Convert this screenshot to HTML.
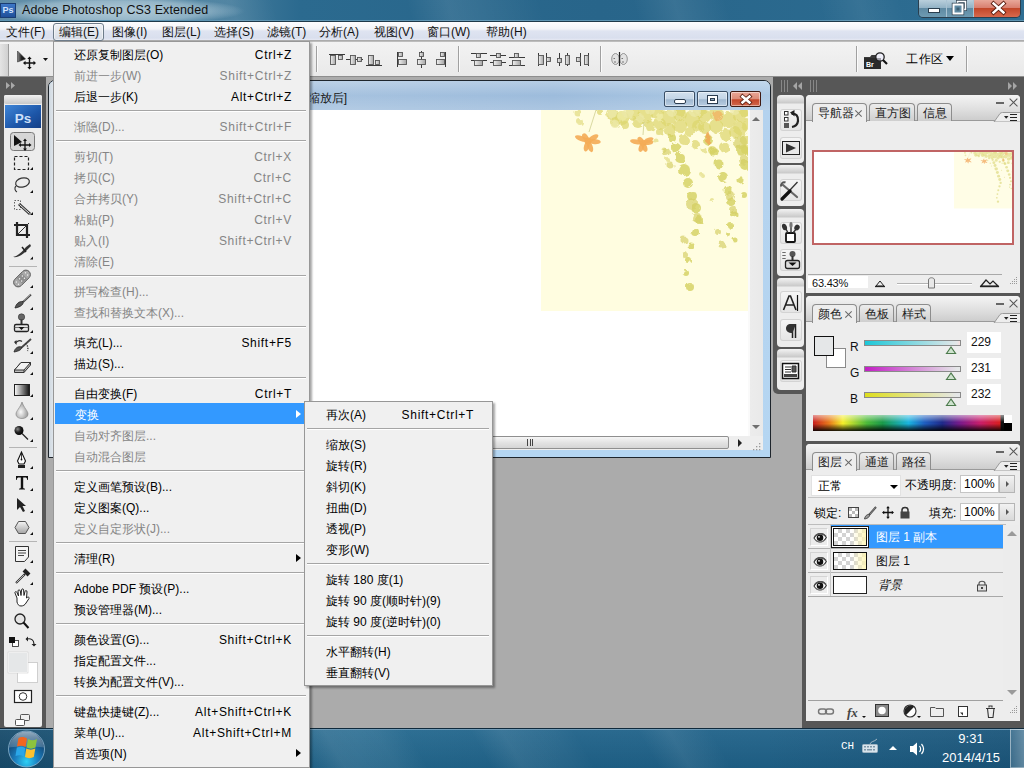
<!DOCTYPE html>
<html><head><meta charset="utf-8">
<style>
*{margin:0;padding:0;box-sizing:border-box}
html,body{width:1024px;height:768px;overflow:hidden}
body{position:relative;background:#ababab;font-family:"Liberation Sans",sans-serif;font-size:12px;color:#000}
.a{position:absolute}
#title{left:0;top:0;width:1024px;height:22px;background:radial-gradient(ellipse 130px 14px at 115px 11px,rgba(200,220,230,.75),rgba(200,220,230,.45) 70%,rgba(200,220,230,0) 100%),linear-gradient(90deg,#5f8ca6 0,#6b97b0 150px,#3f7899 240px,#2b6a8f 300px,#28658a 600px,#2b6a8f 850px,#2f6e93 1024px);border-bottom:1px solid #1f3a4a;box-shadow:inset 0 -1px 0 #5e95b3}
#menubar{left:0;top:22px;width:1024px;height:19px;background:linear-gradient(#fdfdfe 0,#f3f4f8 7px,#dfe4f1 9px,#d9dfee 16px,#e6e9f3 18px);border-bottom:1px solid #acacac}
.mb{position:absolute;top:0;line-height:20px;font-size:12px;color:#111}
#options{left:0;top:41px;width:1024px;height:36px;background:linear-gradient(#f3f3f3,#e9e9e9);border-top:1px solid #bdbdbd;border-bottom:1px solid #8e8e8e}
.vsep{position:absolute;top:4px;width:2px;height:26px;border-left:1px solid #a0a0a0;border-right:1px solid #fbfbfb}
#tools{left:0;top:77px;width:46px;height:651px;background:#575757}
#dock{left:773px;top:76px;width:251px;height:652px;background:#535353}
#doc{left:48px;top:80px;width:722px;height:377px;background:#b9d1ea;border:1px solid #2b3a47;border-radius:6px 6px 0 0}
#taskbar{left:0;top:728px;width:1024px;height:40px;background:linear-gradient(90deg,#174b6b 0,#1d5b80 15%,#24698f 35%,#1f6289 55%,#1f6188 75%,#1a557a 100%)}
#menu{left:53px;top:41px;width:257px;height:727px;background:#f0f0f0;border:1px solid #979797;box-shadow:2px 2px 2px rgba(0,0,0,.35)}
#sub{left:304px;top:401px;width:189px;height:285px;background:#f0f0f0;border:1px solid #979797;box-shadow:2px 2px 2px rgba(0,0,0,.35)}
.mi{position:absolute;left:0;width:100%;height:21px;line-height:24px;padding-left:20px}
.mi .k{position:absolute;right:18px;top:0;letter-spacing:0.7px}
.dis{color:#858585}
#menu .mi{padding-left:20px}
#menu .mi .k{right:17px}
#sub .mi{padding-left:21px}
#sub .mi .k{right:18px}
.mi.hl{background:#3399ff;color:#fff;left:1px;width:249px}
.arr{position:absolute;left:242px;top:6.5px;width:0;height:0;border-left:5px solid #000;border-top:4.5px solid transparent;border-bottom:4.5px solid transparent}
.hl .arr{border-left-color:#fff;left:241px}
.wb{position:absolute;top:10px;width:31px;height:16px;border:1px solid #3a4f66;border-radius:2px;background:linear-gradient(#d3e1ee,#c2d4e6 50%,#9fb8d0 55%,#b9cde2);box-shadow:inset 0 0 0 1px rgba(255,255,255,.45)}
.ig{position:absolute;left:777px;width:27px;background:linear-gradient(#f3f3f3 0,#c9c9c9 8px,#ededed 9px,#ededed);border-radius:4px}
.ib{position:absolute;left:780px;width:22px;height:22px;border-radius:3px;background:linear-gradient(#f6f6f6,#e4e4e4);box-shadow:inset 0 0 0 1px #d3d3d3}
.pn{position:absolute;left:806px;width:214px;background:#ededed;border-radius:4px 4px 0 0;overflow:hidden}
.tabrow{position:absolute;left:0;top:0;width:214px;height:26px;background:linear-gradient(#f4f4f4,#dedede 60%,#cdcdcd);border-bottom:1px solid #9a9a9a}
.tab{position:absolute;top:8px;height:18px;border:1px solid #8d8d8d;border-bottom:none;border-radius:4px 4px 0 0;background:linear-gradient(#ececec,#cfcfcf);font-size:11.5px;line-height:19px;padding-left:5px;color:#222;white-space:nowrap}
.tab.act{background:#ededed;height:19px;z-index:1}
.tx{position:absolute;right:4px;top:6px;width:7px;height:7px;font-size:0}
.tx::before,.tx::after{content:"";position:absolute;left:-1px;top:3px;width:9px;height:1px;background:#666;transform:rotate(45deg)}
.tx::after{transform:rotate(-45deg)}
.pmin{position:absolute;width:8px;height:2px;background:#666}
.pcl{position:absolute;width:9px;height:9px}
.pcl::before,.pcl::after{content:"";position:absolute;left:-1px;top:4px;width:11px;height:1.2px;background:#555;transform:rotate(45deg)}
.pcl::after{transform:rotate(-45deg)}
.pmenu{position:absolute;left:184px;top:17px;width:30px;height:10px}
.pmenu svg{position:absolute;left:0;top:0}
.cl{position:absolute;left:44px;font-size:12px;line-height:14px;color:#111}
.sl{position:absolute;left:58px;width:97px;height:6px;border:1px solid #8a8a8a}
.cv{position:absolute;left:161px;width:34px;height:21px;background:#fff;font-size:12px;line-height:20px;padding-left:4px;color:#111}
.ibox{position:absolute;left:154px;width:39px;height:18px;background:#fff;border:1px solid #c5c5c5;font-size:12px;line-height:17px;padding-left:3px}
.ibtn{position:absolute;left:193px;width:16px;height:18px;background:linear-gradient(#f2f2f2,#d9d9d9);border:1px solid #b5b5b5}
.ibtn::after{content:"";position:absolute;left:6px;top:5px;border-left:3px solid #555;border-top:3px solid transparent;border-bottom:3px solid transparent}
.eye{position:absolute;left:4px;width:18px;height:18px;background:#ececec;border:1px solid #d4d4d4;border-right-color:#fff;border-bottom-color:#fff}
.th{position:absolute;left:27px;width:34px;height:18px;border:1px solid #111;background-color:#fff;background-image:linear-gradient(90deg,rgba(255,250,200,0) 55%,rgba(255,246,180,.9)),linear-gradient(45deg,#d3d3d3 25%,transparent 25%,transparent 75%,#d3d3d3 75%),linear-gradient(45deg,#d3d3d3 25%,transparent 25%,transparent 75%,#d3d3d3 75%);background-size:100% 100%,8px 8px,8px 8px;background-position:0 0,0 0,4px 4px}
.sep{position:absolute;left:2px;right:3px;height:2px;background:#a5a5a5;border-bottom:1px solid #fff}
</style></head><body>
<div id="title" class="a">
 <div class="a" style="left:0;top:0;width:1024px;height:21px;background:linear-gradient(75deg,rgba(255,255,255,0) 0,rgba(255,255,255,0) 20%,rgba(255,255,255,.08) 23%,rgba(255,255,255,0) 27%,rgba(255,255,255,0) 40%,rgba(255,255,255,.09) 44%,rgba(255,255,255,.03) 50%,rgba(255,255,255,0) 53%,rgba(255,255,255,0) 62%,rgba(255,255,255,.08) 66%,rgba(255,255,255,0) 71%,rgba(255,255,255,0) 80%,rgba(255,255,255,.06) 84%,rgba(255,255,255,0) 88%)"></div>
 <div class="a" style="left:0;top:3px;width:16px;height:15px;background:linear-gradient(#3e78c8,#1f4f9a);border:1px solid #1a3d73;color:#cfe3ff;font-size:9px;font-weight:bold;line-height:13px;text-align:center">Ps</div>
 <div class="a" style="left:22px;top:3px;font-size:12.5px;line-height:15px;color:#111;letter-spacing:0.1px">Adobe Photoshop CS3 Extended</div>
 <div class="a" style="left:918px;top:0;width:103px;height:18px;border:1px solid #2a3f4f;border-top:none;border-radius:0 0 5px 5px;overflow:hidden">
  <div class="a" style="left:0;top:0;width:28px;height:17px;background:linear-gradient(#b9cfdc,#93b3c6 45%,#5f8aa3 50%,#6f9bb2);border-right:1px solid #a9c3d3"></div>
  <div class="a" style="left:28px;top:0;width:27px;height:17px;background:linear-gradient(#b9cfdc,#93b3c6 45%,#5f8aa3 50%,#6f9bb2);border-right:1px solid #a9c3d3"></div>
  <div class="a" style="left:55px;top:0;width:48px;height:17px;background:linear-gradient(#e8a89a,#d98070 45%,#c2472a 50%,#d8694d)"></div>
  <svg class="a" style="left:0;top:0" width="103" height="18" viewBox="918 0 103 18">
   <rect x="927.5" y="8.5" width="11" height="4" fill="#fff" stroke="#2b3f4f" stroke-width="1"/>
   <rect x="956.5" y="1.5" width="8" height="8" fill="none" stroke="#2b3f4f" stroke-width="3"/>
   <rect x="956.5" y="1.5" width="8" height="8" fill="none" stroke="#fff" stroke-width="1.6"/>
   <rect x="952.5" y="4.5" width="9" height="9" fill="#5f8aa3" stroke="#2b3f4f" stroke-width="3.4"/>
   <rect x="952.5" y="4.5" width="9" height="9" fill="#5f8aa3" stroke="#fff" stroke-width="2"/>
   <rect x="955.5" y="7.5" width="3" height="3" fill="#3d5f73"/>
   <path d="M992.5 3.5 L1002.5 12.5 M1002.5 3.5 L992.5 12.5" stroke="#5a1d10" stroke-width="4.2" stroke-linecap="square"/>
   <path d="M992.5 3.5 L1002.5 12.5 M1002.5 3.5 L992.5 12.5" stroke="#fff" stroke-width="2.4" stroke-linecap="square"/>
  </svg>
 </div>
</div>
<div id="menubar" class="a">
 <span class="mb" style="left:6px">文件(F)</span>
 <div class="a" style="left:53px;top:1px;width:51px;height:18px;border:1px solid #6e7c8a;border-radius:3px;background:linear-gradient(#eef1f5,#d6dce6);box-shadow:inset 0 0 0 1px rgba(255,255,255,.5)"></div>
 <span class="mb" style="left:59px">编辑(E)</span>
 <span class="mb" style="left:112px">图像(I)</span>
 <span class="mb" style="left:162px">图层(L)</span>
 <span class="mb" style="left:214px">选择(S)</span>
 <span class="mb" style="left:267px">滤镜(T)</span>
 <span class="mb" style="left:319px">分析(A)</span>
 <span class="mb" style="left:374px">视图(V)</span>
 <span class="mb" style="left:427px">窗口(W)</span>
 <span class="mb" style="left:486px">帮助(H)</span>
</div>
<div id="options" class="a">
 <div class="a" style="left:0;top:2px;width:9px;height:32px;background:linear-gradient(90deg,#e4e4e4,#d0d0d0);border-right:1px solid #9a9a9a"></div>
 <svg class="a" style="left:14px;top:6px" width="40" height="22" viewBox="0 0 40 22">
  <defs><linearGradient id="mvg" x1="0" x2="1"><stop offset="0" stop-color="#8a8a8a"/><stop offset="0.5" stop-color="#222"/><stop offset="1" stop-color="#000"/></linearGradient></defs>
  <path d="M3.5 3 L3.5 14 L11.5 11 Z" fill="url(#mvg)" stroke="#333" stroke-width="0.6"/>
  <path d="M15.5 10.5 V19.5 M11 15 H20" stroke="#111" stroke-width="1.4"/>
  <path d="M15.5 8.5 L13.3 11 H17.7 Z M15.5 21.5 L13.3 19 H17.7 Z M9 15 L11.5 12.8 V17.2 Z M22 15 L19.5 12.8 V17.2 Z" fill="#111"/>
  <path d="M29 10 L34 10 L31.5 13 Z" fill="#111"/>
 </svg>
 <div class="vsep" style="left:316px"></div>
 <div class="vsep" style="left:458px"></div>
 <div class="vsep" style="left:600px"></div>
 <div class="vsep" style="left:856px"></div>
 <div class="vsep" style="left:966px"></div>
 <svg class="a" style="left:0;top:-42px" width="1024" height="80" viewBox="0 0 1024 80">
  <defs><linearGradient id="gb" x1="0" x2="1"><stop offset="0" stop-color="#f0f0f0"/><stop offset="1" stop-color="#a5a5a5"/></linearGradient></defs>
  <g stroke="#3a3a3a" stroke-width="1" fill="none">
   <path d="M329 54.5 H345 M346 59.5 H363 M366 65.5 H382 M397.5 52 V67 M421.5 51 V68 M445.5 52 V67"/>
   <path d="M471 53.5 H487 M471 60.5 H487 M490 55.5 H506 M490 62.5 H506 M509 57.5 H525 M509 65.5 H525"/>
   <path d="M538.5 53 V66 M546.5 53 V66 M559.5 53 V66 M567.5 53 V66 M580.5 53 V66 M588.5 53 V66"/>
  </g>
  <g stroke="#555" stroke-width="0.9" fill="url(#gb)">
   <rect x="330.5" y="55.5" width="5" height="9"/><rect x="338.5" y="55.5" width="4" height="4"/>
   <rect x="350.5" y="55.5" width="5" height="9"/><rect x="357.5" y="57.5" width="4" height="4"/>
   <rect x="368.5" y="55.5" width="5" height="9"/><rect x="375.5" y="60.5" width="4" height="4"/>
   <rect x="398.5" y="52.5" width="4" height="4"/><rect x="398.5" y="59.5" width="8" height="5"/>
   <rect x="419.5" y="52.5" width="4" height="4"/><rect x="417.5" y="59.5" width="8" height="5"/>
   <rect x="440.5" y="52.5" width="4" height="4"/><rect x="436.5" y="59.5" width="8" height="5"/>
   <rect x="476.5" y="53.5" width="4" height="4"/><rect x="474.5" y="60.5" width="8" height="5"/>
   <rect x="496.5" y="53.5" width="4" height="4"/><rect x="493.5" y="60.5" width="8" height="5"/>
   <rect x="514.5" y="53.5" width="4" height="4"/><rect x="512.5" y="60.5" width="8" height="5"/>
   <rect x="538.5" y="55.5" width="5" height="9"/><rect x="546.5" y="57.5" width="4" height="4"/>
   <rect x="557.5" y="58.5" width="4" height="4"/><rect x="565.5" y="55.5" width="4" height="9"/>
   <rect x="576.5" y="57.5" width="4" height="4"/><rect x="584.5" y="55.5" width="4" height="9"/>
  </g>
  <g>
   <ellipse cx="615.5" cy="59" rx="3.8" ry="5.5" fill="#e2e2e2" stroke="#8a8a8a" stroke-width="0.9"/>
   <ellipse cx="623.5" cy="59" rx="3.8" ry="5.5" fill="#e2e2e2" stroke="#8a8a8a" stroke-width="0.9"/>
   <path d="M619.5 52 V66" stroke="#222" stroke-width="1.2"/>
   <path d="M613.5 58.5 h1.5 M621.5 58.5 h1.5 M614 62 h2 M622 62 h2" stroke="#777" stroke-width="1"/>
  </g>
 </svg>
 <svg class="a" style="left:862px;top:9px" width="28" height="20" viewBox="0 0 28 20">
  <path d="M2 6 H8 L9.5 4 H14 V18 H2 Z" fill="#3a3a3a"/>
  <rect x="2" y="7" width="17" height="11" fill="#2b2b2b"/>
  <text x="4" y="16" font-size="7" font-weight="bold" fill="#fff" font-family="Liberation Sans">Br</text>
  <circle cx="18" cy="6" r="4.2" fill="#eef" fill-opacity="0.6" stroke="#222" stroke-width="1.3"/>
  <path d="M21 9 L25 13" stroke="#111" stroke-width="2.2"/>
 </svg>
 <div class="a" style="left:906px;top:9px;font-size:12px;line-height:16px;color:#000;letter-spacing:0.5px">工作区</div>
 <div class="a" style="left:946px;top:14px;width:0;height:0;border-top:5px solid #000;border-left:4.5px solid transparent;border-right:4.5px solid transparent"></div>
</div>
<div id="tools" class="a"></div>
<svg class="a" style="left:0;top:0" width="50" height="728" viewBox="0 0 50 728">
 <defs>
  <linearGradient id="tg1" x1="0" y1="0" x2="0" y2="1"><stop offset="0" stop-color="#f2f2f2"/><stop offset="1" stop-color="#c9c9c9"/></linearGradient>
  <linearGradient id="psg" x1="0" y1="0" x2="1" y2="1"><stop offset="0" stop-color="#3f86d8"/><stop offset="0.6" stop-color="#1d56a8"/><stop offset="1" stop-color="#163f86"/></linearGradient>
  <linearGradient id="grd" x1="0" x2="1"><stop offset="0" stop-color="#fff"/><stop offset="1" stop-color="#111"/></linearGradient>
  <radialGradient id="dropg" cx="0.4" cy="0.6" r="0.6"><stop offset="0" stop-color="#fafafa"/><stop offset="1" stop-color="#9a9a9a"/></radialGradient>
  <radialGradient id="ballg" cx="0.35" cy="0.35" r="0.7"><stop offset="0" stop-color="#888"/><stop offset="0.5" stop-color="#222"/><stop offset="1" stop-color="#000"/></radialGradient>
  <linearGradient id="hexg" x1="0" y1="0" x2="0" y2="1"><stop offset="0" stop-color="#f5f5f5"/><stop offset="1" stop-color="#a5a5a5"/></linearGradient>
 </defs>
 <!-- header -->
 <path d="M6 82 L10 85.5 L6 89 Z M11 82 L15 85.5 L11 89 Z" fill="#a9a9a9"/>
 <!-- panel -->
 <rect x="4" y="95" width="38" height="632" rx="2" fill="#ededed"/>
 <rect x="4" y="95" width="38" height="9" rx="2" fill="url(#tg1)"/>
 <rect x="5" y="105" width="36" height="23" fill="url(#psg)"/>
 <text x="23" y="122.5" text-anchor="middle" font-family="Liberation Sans" font-size="13.5" font-weight="bold" fill="#cfe1fa">Ps</text>
 <!-- move tool selected -->
 <rect x="10.5" y="132.5" width="24" height="18" rx="3" fill="#d6d6d6" stroke="#7a7a7a" stroke-width="1"/>
 <path d="M14 135 L14 146 L22 142 Z" fill="#111"/>
 <path d="M25 140 V150 M20 145 H30" stroke="#111" stroke-width="1.3"/>
 <path d="M25 138.5 L23 141 H27 Z M25 151 L23 148.5 H27 Z M18.5 145 L21 143 V147 Z M31.5 145 L29 143 V147 Z" fill="#111"/>
 <!-- marquee -->
 <rect x="14.5" y="156.5" width="14" height="13" fill="none" stroke="#222" stroke-width="1.2" stroke-dasharray="3 2"/>
 <path d="M30 170 L33 167 V170 Z" fill="#111"/>
 <!-- lasso -->
 <ellipse cx="22.5" cy="182.5" rx="7" ry="4.5" fill="none" stroke="#333" stroke-width="1.2" transform="rotate(-15 22.5 182.5)"/>
 <path d="M16 186 C14 188 15 191 17 192" fill="none" stroke="#333" stroke-width="1.1"/>
 <path d="M30 193 L33 190 V193 Z" fill="#111"/>
 <!-- magic wand (quick select) -->
 <rect x="14.5" y="200.5" width="6" height="9" fill="none" stroke="#555" stroke-width="0.9" stroke-dasharray="1.5 1.5"/>
 <path d="M19 204 L30 214" stroke="#333" stroke-width="3"/>
 <path d="M19.5 204.5 L29.5 213.5" stroke="#eee" stroke-width="1"/>
 <path d="M30 215 L33 212 V215 Z" fill="#111"/>
 <!-- crop -->
 <path d="M17 222 V235 H30 M14 225 H27 V238" fill="none" stroke="#222" stroke-width="2.2"/>
 <path d="M18 234 L29 223" stroke="#333" stroke-width="1"/>
 <!-- slice -->
 <path d="M13 257 C18 256 23 251 26 247 L30 244 L31 246 L27 250 C24 254 18 258 13 257 Z" fill="#333"/>
 <path d="M22 247 L26 252" stroke="#222" stroke-width="1.5"/>
 <path d="M30 259.5 L33 256.5 V259.5 Z" fill="#111"/>
 <line x1="9" y1="266.5" x2="37" y2="266.5" stroke="#b5b5b5"/>
 <!-- healing -->
 <g transform="rotate(-45 22 278.5)"><rect x="12" y="274" width="20" height="9" rx="4.5" fill="#a9a9a9" stroke="#555" stroke-width="0.9"/>
 <rect x="18.5" y="274.5" width="7" height="8" fill="#8f8f8f"/>
 <circle cx="15.5" cy="277" r="0.7" fill="#eee"/><circle cx="15.5" cy="280" r="0.7" fill="#eee"/><circle cx="20" cy="277" r="0.7" fill="#eee"/><circle cx="20" cy="280" r="0.7" fill="#eee"/><circle cx="24" cy="277" r="0.7" fill="#eee"/><circle cx="24" cy="280" r="0.7" fill="#eee"/><circle cx="28.5" cy="277" r="0.7" fill="#eee"/><circle cx="28.5" cy="280" r="0.7" fill="#eee"/></g>
 <path d="M30 288 L33 285 V288 Z" fill="#111"/>
 <!-- brush -->
 <path d="M31 294.5 L23 302" stroke="#444" stroke-width="1.8"/>
 <path d="M30.5 294.5 L23.5 301" stroke="#ddd" stroke-width="0.6"/>
 <path d="M15 308 C16 304 19 301 23 301.5 C24 304 21 307 15 308 Z" fill="#555" stroke="#222" stroke-width="0.8"/>
 <path d="M30 310 L33 307 V310 Z" fill="#111"/>
 <!-- stamp -->
 <circle cx="21.5" cy="317" r="3.2" fill="#666" stroke="#333" stroke-width="0.6"/>
 <rect x="20.5" y="319.5" width="2" height="4.5" fill="#333"/>
 <rect x="14.5" y="324.5" width="14" height="7" rx="1.5" fill="#e6e6e6" stroke="#222" stroke-width="1.3"/>
 <path d="M14.5 327.5 H28.5" stroke="#555" stroke-width="0.8"/>
 <path d="M18.5 327 H24.5 L21.5 330 Z" fill="#111"/>
 <path d="M30 333 L33 330 V333 Z" fill="#111"/>
 <!-- history brush -->
 <path d="M31 339 L21 348" stroke="#444" stroke-width="1.8"/>
 <path d="M14 352 C15 348 18 346 21.5 347 C22 349 20 351 14 352 Z" fill="#555" stroke="#222" stroke-width="0.8"/>
 <path d="M15.5 343.5 C17 340.5 20 340 22 341.5" fill="none" stroke="#333" stroke-width="1.2"/>
 <path d="M14 342 L16.5 340 L16.5 345 Z" fill="#333"/>
 <path d="M25.5 343.5 C27.5 345 28.5 348 27.5 351" fill="none" stroke="#333" stroke-width="1.3" stroke-dasharray="1.3 1.2"/>
 <path d="M30 354 L33 351 V354 Z" fill="#111"/>
 <!-- eraser -->
 <path d="M14.5 370 L21 362.5 H30.5 V365 L24 372.5 H14.5 Z" fill="#bdbdbd" stroke="#333" stroke-width="1"/>
 <path d="M14.5 370 L21 362.5 H30.5 L24 370 Z" fill="#f2f2f2" stroke="#333" stroke-width="1"/>
 <path d="M24 370 V372.5" stroke="#333" stroke-width="1"/>
 <path d="M30 375 L33 372 V375 Z" fill="#111"/>
 <!-- gradient -->
 <rect x="14.5" y="384.5" width="15" height="11" fill="url(#grd)" stroke="#222" stroke-width="1"/>
 <path d="M30 397 L33 394 V397 Z" fill="#111"/>
 <!-- blur -->
 <path d="M22 402 C20 408 16 411 16 414 C16 417 19 418.5 22 418.5 C25 418.5 28 417 28 414 C28 411 24 408 22 402 Z" fill="url(#dropg)" stroke="#8a8a8a" stroke-width="0.7"/>
 <path d="M30 420 L33 417 V420 Z" fill="#111"/>
 <!-- dodge -->
 <circle cx="19" cy="430.5" r="4.5" fill="url(#ballg)"/>
 <path d="M22 433.5 L28 439.5" stroke="#222" stroke-width="1.3"/>
 <path d="M30 442 L33 439 V442 Z" fill="#111"/>
 <line x1="9" y1="447.5" x2="37" y2="447.5" stroke="#b5b5b5"/>
 <!-- pen -->
 <path d="M21.5 452 L17.5 461 L19 464 H24 L25.5 461 Z" fill="#fff" stroke="#111" stroke-width="1.1"/>
 <path d="M21.5 453 V459" stroke="#111" stroke-width="0.8"/><circle cx="21.5" cy="459.5" r="0.9" fill="#111"/>
 <rect x="18" y="465" width="7" height="3" fill="#222"/>
 <path d="M30 469 L33 466 V469 Z" fill="#111"/>
 <!-- type -->
 <path d="M16 476 H28 V480 H27.3 C27 478 26.5 477.6 25 477.6 H23.2 V487.5 C23.2 488.3 23.6 488.6 25 488.7 V489.5 H19 V488.7 C20.4 488.6 20.8 488.3 20.8 487.5 V477.6 H19 C17.5 477.6 17 478 16.7 480 H16 Z" fill="#111"/>
 <path d="M30 491 L33 488 V491 Z" fill="#111"/>
 <!-- path select -->
 <path d="M17 498 L17 510 L20 507 L23 512 L25 511 L22.5 506 L26 506 Z" fill="#222"/>
 <path d="M30 513 L33 510 V513 Z" fill="#111"/>
 <!-- shape -->
 <path d="M18.5 521.5 H25.5 L29 527.5 L25.5 533.5 H18.5 L15 527.5 Z" fill="url(#hexg)" stroke="#555" stroke-width="1"/>
 <path d="M30 535 L33 532 V535 Z" fill="#111"/>
 <line x1="9" y1="541.5" x2="37" y2="541.5" stroke="#b5b5b5"/>
 <!-- notes -->
 <path d="M15.5 546.5 H28.5 V557 L24.5 561.5 H15.5 Z" fill="#f4f4f4" stroke="#333" stroke-width="1"/>
 <path d="M18 550.5 H26 M18 553 H26 M18 555.5 H24" stroke="#333" stroke-width="0.9"/>
 <path d="M30 563 L33 560 V563 Z" fill="#111"/>
 <!-- eyedropper -->
 <path d="M16 583 L25 574" stroke="#333" stroke-width="2.2"/>
 <path d="M16.5 582.5 L24 575" stroke="#eee" stroke-width="0.7"/>
 <path d="M24 570 L29 575" stroke="#222" stroke-width="4"/>
 <path d="M30 585 L33 582 V585 Z" fill="#111"/>
 <!-- hand -->
 <path d="M17 598 L15 593 C14.5 591.5 16.5 591 17 592.5 L18.5 596 L18 591 C18 589.5 20 589.5 20.3 591 L21 595.5 L21.5 590 C21.7 588.5 23.5 588.5 23.6 590 L24 595.5 L25 591.5 C25.3 590 27.2 590.3 27 592 L26.5 598 C28 596.5 29.5 597 29 598.5 L26 603 C25 605 23 606 21 606 C18.5 606 17.5 604 17 602 Z" fill="#fff" stroke="#222" stroke-width="1"/>
 <!-- zoom -->
 <circle cx="20" cy="619" r="5" fill="#e4e4e4" stroke="#222" stroke-width="1.3"/>
 <path d="M23.5 622.5 L28.5 628" stroke="#111" stroke-width="2"/>
 <!-- default colors / swap -->
 <rect x="12.5" y="640.5" width="6" height="6" fill="#fff" stroke="#222" stroke-width="0.8"/>
 <rect x="9" y="637" width="6" height="6" fill="#111"/>
 <path d="M27 639 C31 638 34 640 34 644" fill="none" stroke="#222" stroke-width="1.2"/>
 <path d="M25.5 639 L28 636.5 V641.5 Z M34 646.5 L31.5 644 H36.5 Z" fill="#222"/>
 <!-- fg/bg -->
 <rect x="17.5" y="662.5" width="20" height="20" fill="#fff" stroke="#cfcfcf" stroke-width="1"/>
 <rect x="8.5" y="652.5" width="19" height="20" fill="#e5e7e8" stroke="#fdfdfd" stroke-width="1"/>
 <rect x="8" y="652" width="20" height="21" fill="none" stroke="#c8c8c8" stroke-width="0.5"/>
 <!-- quick mask -->
 <rect x="14.5" y="690.5" width="17" height="12" fill="#fff" stroke="#222" stroke-width="1.2"/>
 <circle cx="23" cy="696.5" r="3.8" fill="#fff" stroke="#333" stroke-width="1"/>
 <!-- screen mode -->
 <rect x="20.5" y="714.5" width="9" height="6" rx="1" fill="#eee" stroke="#444" stroke-width="0.9"/>
 <rect x="15.5" y="719.5" width="9" height="6" rx="1" fill="#fff" stroke="#444" stroke-width="0.9"/>
</svg>

<div class="a" style="left:48px;top:80px;width:723px;height:378px;border:1px solid #1e252c;border-radius:7px 7px 0 0;background:linear-gradient(#a9c5e0,#b4d2ee 30px,#b5d6f2);overflow:hidden;box-shadow:inset 1px 1px 0 rgba(255,255,255,.7)">
 <div class="a" style="left:0;top:0;width:721px;height:29px;background:linear-gradient(90deg,#8fb0d3,#a6c2df 40%,#9dbcdc 70%,#aecae5);"></div>
 <div class="a" style="left:0;top:0;width:721px;height:29px;background:linear-gradient(rgba(255,255,255,.25),rgba(255,255,255,0) 50%,rgba(255,255,255,.15))"></div>
 <div class="a" style="right:423px;top:9px;font-size:12px;line-height:16px;color:#1a1a1a;white-space:nowrap">花藤.psd @ 63.4% (图层 1 副本, RGB/8) [缩放后]</div>
 <div class="wb" style="left:615px"><div class="a" style="left:9px;top:7px;width:12px;height:5px;background:#fff;border:1px solid #2a3b4e;border-radius:2px"></div></div>
 <div class="wb" style="left:648px"><div class="a" style="left:9px;top:3px;width:11px;height:9px;background:#fff;border:1px solid #2a3b4e"><div class="a" style="left:2px;top:2px;width:5px;height:3px;background:#8ea6bd;border:1px solid #2a3b4e"></div></div></div>
 <div class="wb" style="left:681px;background:linear-gradient(#eaa696,#dc8c78 50%,#c4472a 55%,#d2684c);border-color:#3f1a12"><svg class="a" style="left:0;top:0" width="31" height="16" viewBox="0 0 31 16"><path d="M11.5 4.5 L18.5 10.5 M18.5 4.5 L11.5 10.5" stroke="#5a1d10" stroke-width="4.2" stroke-linecap="square"/><path d="M11.5 4.5 L18.5 10.5 M18.5 4.5 L11.5 10.5" stroke="#fff" stroke-width="2.6" stroke-linecap="square"/></svg></div>
 <!-- canvas -->
 <div class="a" style="left:7px;top:29px;width:692px;height:326px;background:#fff;overflow:hidden">
  <svg class="a" style="left:485px;top:0" width="210" height="202" viewBox="0 0 210 202">
   <defs>
    <filter id="soft" x="-10%" y="-10%" width="120%" height="120%"><feTurbulence type="fractalNoise" baseFrequency="0.18" numOctaves="2" seed="3" result="n"/><feDisplacementMap in="SourceGraphic" in2="n" scale="5" result="d"/><feGaussianBlur in="d" stdDeviation="0.6"/></filter>
    <filter id="soft2" x="-20%" y="-20%" width="140%" height="140%"><feGaussianBlur stdDeviation="0.6"/></filter>
   </defs>
   <rect x="0" y="0" width="210" height="201" fill="#fffde0"/>
   <g filter="url(#soft)">
   <circle cx="71" cy="4" r="6" fill="#dcd66e" fill-opacity="0.72"/><circle cx="81" cy="8" r="7" fill="#dcd66e" fill-opacity="0.72"/><circle cx="92" cy="3" r="7" fill="#dcd66e" fill-opacity="0.72"/><circle cx="104" cy="6" r="8" fill="#dcd66e" fill-opacity="0.72"/><circle cx="116" cy="2" r="7" fill="#dcd66e" fill-opacity="0.72"/><circle cx="127" cy="8" r="8" fill="#dcd66e" fill-opacity="0.72"/><circle cx="139" cy="4" r="7" fill="#dcd66e" fill-opacity="0.72"/><circle cx="151" cy="10" r="8" fill="#dcd66e" fill-opacity="0.72"/><circle cx="163" cy="6" r="7" fill="#dcd66e" fill-opacity="0.72"/><circle cx="175" cy="3" r="7" fill="#dcd66e" fill-opacity="0.72"/><circle cx="187" cy="10" r="8" fill="#dcd66e" fill-opacity="0.72"/><circle cx="199" cy="4" r="8" fill="#dcd66e" fill-opacity="0.72"/><circle cx="206" cy="15" r="6" fill="#dcd66e" fill-opacity="0.72"/><circle cx="109" cy="16" r="5" fill="#dcd66e" fill-opacity="0.72"/><circle cx="129" cy="20" r="6" fill="#dcd66e" fill-opacity="0.72"/><circle cx="149" cy="22" r="5" fill="#dcd66e" fill-opacity="0.72"/><circle cx="164" cy="18" r="6" fill="#dcd66e" fill-opacity="0.72"/><circle cx="194" cy="22" r="6" fill="#dcd66e" fill-opacity="0.72"/><circle cx="204" cy="30" r="5" fill="#dcd66e" fill-opacity="0.72"/><circle cx="84" cy="15" r="4" fill="#dcd66e" fill-opacity="0.72"/><circle cx="59" cy="2" r="3" fill="#dcd66e" fill-opacity="0.72"/><circle cx="74" cy="12" r="5" fill="#dcd66e" fill-opacity="0.72"/><circle cx="97" cy="12" r="6" fill="#dcd66e" fill-opacity="0.72"/><circle cx="119" cy="14" r="6" fill="#dcd66e" fill-opacity="0.72"/><circle cx="139" cy="16" r="7" fill="#dcd66e" fill-opacity="0.72"/><circle cx="157" cy="16" r="6" fill="#dcd66e" fill-opacity="0.72"/><circle cx="175" cy="16" r="7" fill="#dcd66e" fill-opacity="0.72"/><circle cx="185" cy="25" r="6" fill="#dcd66e" fill-opacity="0.72"/><circle cx="199" cy="18" r="7" fill="#dcd66e" fill-opacity="0.72"/><circle cx="205" cy="40" r="5" fill="#dcd66e" fill-opacity="0.72"/><circle cx="143" cy="30" r="5" fill="#dcd66e" fill-opacity="0.72"/><circle cx="155" cy="35" r="4" fill="#dcd66e" fill-opacity="0.72"/><circle cx="171" cy="40" r="4" fill="#dcd66e" fill-opacity="0.72"/><circle cx="119" cy="22" r="4" fill="#dcd66e" fill-opacity="0.72"/><circle cx="184" cy="38" r="5" fill="#dcd66e" fill-opacity="0.72"/><circle cx="205" cy="2" r="6" fill="#dcd66e" fill-opacity="0.72"/><circle cx="159" cy="2" r="6" fill="#dcd66e" fill-opacity="0.72"/><circle cx="139" cy="0" r="6" fill="#dcd66e" fill-opacity="0.72"/>
   <circle cx="131" cy="28" r="4" fill="#d3d05e" fill-opacity="0.8"/><circle cx="135" cy="38" r="5" fill="#d3d05e" fill-opacity="0.8"/><circle cx="139" cy="48" r="5" fill="#d3d05e" fill-opacity="0.8"/><circle cx="143" cy="60" r="6" fill="#d3d05e" fill-opacity="0.8"/><circle cx="147" cy="73" r="5" fill="#d3d05e" fill-opacity="0.8"/><circle cx="151" cy="86" r="5" fill="#d3d05e" fill-opacity="0.8"/><circle cx="155" cy="98" r="5" fill="#d3d05e" fill-opacity="0.8"/><circle cx="158" cy="110" r="4" fill="#d3d05e" fill-opacity="0.8"/><circle cx="154" cy="122" r="4" fill="#d3d05e" fill-opacity="0.8"/><circle cx="150" cy="136" r="3.5" fill="#d3d05e" fill-opacity="0.8"/><circle cx="147" cy="150" r="3" fill="#d3d05e" fill-opacity="0.8"/><circle cx="145" cy="163" r="3" fill="#d3d05e" fill-opacity="0.8"/><circle cx="149" cy="177" r="4" fill="#d3d05e" fill-opacity="0.8"/>
   <circle cx="167" cy="30" r="5" fill="#d3d05e" fill-opacity="0.8"/><circle cx="173" cy="42" r="4.5" fill="#d3d05e" fill-opacity="0.8"/><circle cx="178" cy="54" r="4.5" fill="#d3d05e" fill-opacity="0.8"/><circle cx="182" cy="67" r="5" fill="#d3d05e" fill-opacity="0.8"/><circle cx="187" cy="80" r="4.5" fill="#d3d05e" fill-opacity="0.8"/><circle cx="190" cy="92" r="4" fill="#d3d05e" fill-opacity="0.8"/><circle cx="193" cy="104" r="3.5" fill="#d3d05e" fill-opacity="0.8"/><circle cx="190" cy="116" r="3" fill="#d3d05e" fill-opacity="0.8"/><circle cx="194" cy="130" r="2.5" fill="#d3d05e" fill-opacity="0.8"/><circle cx="188" cy="125" r="2" fill="#d3d05e" fill-opacity="0.8"/>
   <circle cx="201" cy="40" r="6" fill="#d3d05e" fill-opacity="0.8"/><circle cx="204" cy="55" r="5" fill="#d3d05e" fill-opacity="0.8"/><circle cx="199" cy="70" r="3.5" fill="#d3d05e" fill-opacity="0.8"/><circle cx="203" cy="85" r="3" fill="#d3d05e" fill-opacity="0.8"/>
   <circle cx="37" cy="3" r="3.5" fill="#dcd66e" fill-opacity="0.6"/><circle cx="39" cy="12" r="3" fill="#dcd66e" fill-opacity="0.6"/><circle cx="123" cy="40" r="2.5" fill="#dcd66e" fill-opacity="0.6"/><circle cx="127" cy="50" r="2" fill="#dcd66e" fill-opacity="0.6"/><circle cx="163" cy="40" r="2.5" fill="#dcd66e" fill-opacity="0.6"/><circle cx="114" cy="30" r="2.5" fill="#dcd66e" fill-opacity="0.6"/><circle cx="161" cy="65" r="2" fill="#dcd66e" fill-opacity="0.6"/><circle cx="171" cy="90" r="2" fill="#dcd66e" fill-opacity="0.6"/>
   <circle cx="81" cy="6" r="5" fill="#eeeaa0" fill-opacity="0.8"/>
   <circle cx="119" cy="7" r="4" fill="#f0eca8" fill-opacity="0.8"/>
   <circle cx="71" cy="3" r="5" fill="#ece8a8" fill-opacity="0.75"/><circle cx="87" cy="2" r="6" fill="#ece8a8" fill-opacity="0.75"/><circle cx="109" cy="0" r="5" fill="#ece8a8" fill-opacity="0.75"/><circle cx="131" cy="2" r="5" fill="#ece8a8" fill-opacity="0.75"/><circle cx="154" cy="1" r="6" fill="#ece8a8" fill-opacity="0.75"/><circle cx="194" cy="0" r="5" fill="#ece8a8" fill-opacity="0.75"/><circle cx="74" cy="14" r="4" fill="#ece8a8" fill-opacity="0.75"/><circle cx="99" cy="8" r="4" fill="#ece8a8" fill-opacity="0.75"/><circle cx="125" cy="42" r="4" fill="#d6d068" fill-opacity="0.7"/><circle cx="129" cy="55" r="3.5" fill="#d6d068" fill-opacity="0.7"/><circle cx="151" cy="94" r="6" fill="#d6d068" fill-opacity="0.7"/><circle cx="156" cy="108" r="5" fill="#d6d068" fill-opacity="0.7"/><circle cx="189" cy="86" r="5" fill="#d6d068" fill-opacity="0.7"/><circle cx="192" cy="100" r="4" fill="#d6d068" fill-opacity="0.7"/><circle cx="177" cy="122" r="3" fill="#d6d068" fill-opacity="0.7"/><circle cx="181" cy="135" r="3.5" fill="#d6d068" fill-opacity="0.7"/><circle cx="199" cy="32" r="7" fill="#d6d068" fill-opacity="0.7"/><circle cx="203" cy="50" r="5" fill="#d6d068" fill-opacity="0.7"/><circle cx="144" cy="145" r="3" fill="#d6d068" fill-opacity="0.7"/><circle cx="143" cy="130" r="3.5" fill="#d6d068" fill-opacity="0.7"/><circle cx="177" cy="6" r="5" fill="#f2b060" fill-opacity="0.75"/>
   <ellipse cx="167" cy="28" rx="2.5" ry="6" fill="#f0a855" fill-opacity="0.9"/>
   </g>
   <g fill="#f4ac58" fill-opacity="0.92" filter="url(#soft2)"><g transform="translate(47,31) scale(1.0)"><circle cx="0" cy="0" r="3.5"/><ellipse cx="0" cy="-7.0" rx="2.6" ry="6.8" transform="rotate(-70)"/><ellipse cx="0" cy="-4.5" rx="2.6" ry="4.3" transform="rotate(-35)"/><ellipse cx="0" cy="-6.0" rx="2.6" ry="5.8" transform="rotate(60)"/><ellipse cx="0" cy="-6.5" rx="2.6" ry="6.3" transform="rotate(95)"/><ellipse cx="0" cy="-6.0" rx="2.6" ry="5.8" transform="rotate(160)"/><ellipse cx="0" cy="-5.5" rx="2.6" ry="5.3" transform="rotate(-165)"/></g><g transform="translate(102,33) scale(0.95)"><circle cx="0" cy="0" r="3.5"/><ellipse cx="0" cy="-7.0" rx="2.6" ry="6.8" transform="rotate(-80)"/><ellipse cx="0" cy="-4.0" rx="2.6" ry="3.8" transform="rotate(-40)"/><ellipse cx="0" cy="-6.0" rx="2.6" ry="5.8" transform="rotate(65)"/><ellipse cx="0" cy="-5.5" rx="2.6" ry="5.3" transform="rotate(85)"/><ellipse cx="0" cy="-5.0" rx="2.6" ry="4.8" transform="rotate(160)"/><ellipse cx="0" cy="-5.0" rx="2.6" ry="4.8" transform="rotate(-160)"/></g></g>
   <path d="M55 0 L48 22 M103 12 L102 25" stroke="#cfcf90" stroke-width="0.8" fill="none"/>
  </svg>
 </div>
 <!-- v scrollbar -->
 <div class="a" style="left:699px;top:29px;width:15px;height:326px;background:linear-gradient(90deg,#fafafa 0,#fafafa 2px,#ececec 2px,#e9e9e9)"></div>
 <div class="a" style="left:703px;top:36px;width:0;height:0;border-bottom:4px solid #6f6f6f;border-left:4px solid transparent;border-right:4px solid transparent"></div>
 <div class="a" style="left:703px;top:344px;width:0;height:0;border-top:4px solid #6f6f6f;border-left:4px solid transparent;border-right:4px solid transparent"></div>
 <!-- h scrollbar -->
 <div class="a" style="left:7px;top:355px;width:707px;height:14px;background:#eeeeee"></div>
 <div class="a" style="left:7px;top:355px;width:673px;height:13px;background:linear-gradient(#f6f6f6,#e3e3e3 50%,#d5d5d5);border:1px solid #8f8f8f;border-radius:2px"></div>
 <div class="a" style="left:478px;top:358px;width:6px;height:7px;border-left:1px solid #444;border-right:1px solid #444"><div class="a" style="left:1.5px;top:0;width:1px;height:7px;background:#444"></div></div>
 <div class="a" style="left:689px;top:358px;width:0;height:0;border-left:4px solid #222;border-top:4px solid transparent;border-bottom:4px solid transparent"></div>
 <svg class="a" style="left:704px;top:362px" width="9" height="8"><g fill="#9a9a9a"><rect x="6" y="0" width="1.3" height="1.3"/><rect x="3" y="3" width="1.3" height="1.3"/><rect x="6" y="3" width="1.3" height="1.3"/><rect x="0" y="6" width="1.3" height="1.3"/><rect x="3" y="6" width="1.3" height="1.3"/><rect x="6" y="6" width="1.3" height="1.3"/></g></svg>
<div class="a" style="left:0;top:0;width:5px;height:376px;background:linear-gradient(90deg,#cfd8e0,#e2e8ee)"></div>
</div>

<!-- dock background -->
<div class="a" style="left:773px;top:77px;width:251px;height:18px;background:#575757"></div>
<div class="a" style="left:773px;top:95px;width:33px;height:299px;background:#575757;border-radius:0 0 0 5px"></div>
<div class="a" style="left:802px;top:95px;width:222px;height:633px;background:#575757"></div>
<svg class="a" style="left:773px;top:76px" width="251" height="19" viewBox="773 76 251 19">
 <path d="M781.5 80 V92 M784.5 80 V92 M787.5 80 V92 M810.5 80 V92 M813.5 80 V92 M816.5 80 V92" stroke="#888" stroke-width="1"/>
 <path d="M797 82 L793 86 L797 90 Z M802 82 L798 86 L802 90 Z" fill="#a5a5a5"/>
 <path d="M1008 82 L1012 86 L1008 90 Z M1013 82 L1017 86 L1013 90 Z" fill="#a5a5a5"/>
</svg>
<!-- icon strip groups -->
<div class="ig" style="top:95px;height:68px"></div>
<div class="ig" style="top:165px;height:41px"></div>
<div class="ig" style="top:209px;height:67px"></div>
<div class="ig" style="top:278px;height:69px"></div>
<div class="ig" style="top:349px;height:41px"></div>
<div class="ib" style="top:109px"></div><div class="ib" style="top:137px"></div>
<div class="ib" style="top:179px"></div>
<div class="ib" style="top:222px"></div><div class="ib" style="top:249px"></div>
<div class="ib" style="top:291px"></div><div class="ib" style="top:319px"></div>
<div class="ib" style="top:360px"></div>
<svg class="a" style="left:773px;top:95px" width="33" height="300" viewBox="773 95 33 300">
 <!-- history -->
 <rect x="784.5" y="111.5" width="3.5" height="3.5" fill="#fff" stroke="#333" stroke-width="1"/>
 <rect x="784.5" y="117.5" width="3.5" height="3.5" fill="#fff" stroke="#333" stroke-width="1"/>
 <rect x="784" y="123" width="5" height="5" fill="#555"/>
 <path d="M791.5 114 C796 113 798.5 116 798 121 C797.5 124.5 795 126.5 792 127" fill="none" stroke="#222" stroke-width="2.2"/>
 <path d="M790 112.5 L794.5 110 L794.5 116.5 Z" fill="#222"/>
 <!-- actions -->
 <rect x="782.5" y="141.5" width="17" height="13" fill="#e8e8e8" stroke="#222" stroke-width="1"/>
 <path d="M786 143.5 V152.5 L796 148 Z" fill="#333"/>
 <!-- tools -->
 <path d="M783 185 L797 197" stroke="#666" stroke-width="2.2" stroke-linecap="round"/>
 <path d="M781.5 186.5 a3 3 0 0 1 4 -4" fill="none" stroke="#555" stroke-width="2"/>
 <path d="M790 190 L797.5 182" stroke="#333" stroke-width="1.3"/>
 <path d="M782 199 L790 191" stroke="#111" stroke-width="3.2" stroke-linecap="round"/>
 <!-- brushes -->
 <rect x="786" y="233" width="9" height="9" rx="1" fill="#fff" stroke="#111" stroke-width="1.8"/>
 <path d="M788 233 L785 227 M791 233 L791 225 M793 233 L797 228" stroke="#333" stroke-width="1.4"/>
 <ellipse cx="784.5" cy="227" rx="2.4" ry="3.4" fill="#333" transform="rotate(-20 784.5 227)"/><ellipse cx="797" cy="227.5" rx="2.6" ry="3" fill="#333" transform="rotate(30 797 227.5)"/><ellipse cx="791" cy="225" rx="1.6" ry="3" fill="#777"/>
 <!-- clone source -->
 <path d="M782.5 252.5 h3.5 M782.5 255.5 h3.5 M782.5 258.5 h3.5" stroke="#333" stroke-width="1.2" stroke-dasharray="1.2 0.6"/>
 <circle cx="792.5" cy="254" r="3" fill="#555"/>
 <rect x="791.5" y="256" width="2" height="4" fill="#333"/>
 <rect x="785.5" y="260.5" width="14" height="8" rx="2" fill="#ddd" stroke="#222" stroke-width="1.3"/>
 <path d="M788.5 262.5 H796.5 L792.5 266 Z" fill="#111"/>
 <!-- character -->
 <path d="M783.5 310 L789 296 H790.5 L796 310 M785.5 305 H794" fill="none" stroke="#222" stroke-width="1.6"/>
 <path d="M797.5 295 V311" stroke="#111" stroke-width="1.2"/>
 <!-- paragraph -->
 <path d="M792.5 324 V338 M795.5 324 V338" stroke="#222" stroke-width="1.5"/>
 <path d="M796 324 H791 C787.5 324 786 326 786 328.5 C786 331 788 333 792.5 333 Z" fill="#333"/>
 <!-- layer comps -->
 <rect x="782.5" y="363.5" width="16" height="15" fill="#fff" stroke="#111" stroke-width="1.5"/>
 <path d="M785 367 H791 M785 369.5 H791 M785 372 H791 M792 366 H796 V372 H792 Z" stroke="#333" stroke-width="1" fill="#555"/>
 <rect x="784" y="374" width="13" height="3" fill="#444"/>
</svg>

<!-- Panel: navigator -->
<div class="pn" style="top:95px;height:198px">
 <div class="tabrow"></div>
 <div class="tab act" style="left:6px;width:55px">导航器<span class="tx">×</span></div>
 <div class="tab" style="left:63px;width:46px">直方图</div>
 <div class="tab" style="left:111px;width:35px">信息</div>
 <div class="pmin" style="left:190px;top:7px"></div><div class="pcl" style="left:203px;top:3px"></div>
 <div class="pmenu"><svg width="30" height="10" viewBox="0 0 30 10"><path d="M4 10 L10 1.5 Q11 0.5 12.5 0.5 H31 V10 Z" fill="#ededed" stroke="#9a9a9a" stroke-width="1"/><path d="M14 4 H18.5 L16.2 6.8 Z" fill="#222"/><path d="M20 2.5 H27 M20 5.5 H27 M20 8.5 H27" stroke="#222" stroke-width="1.1"/></svg></div>
 <div class="a" style="left:6px;top:55px;width:202px;height:95px;border:2px solid #c06464;background:#fff;overflow:hidden">
  <svg class="a" style="left:140px;top:0;opacity:0.8" width="62" height="57" viewBox="0 0 210 203" preserveAspectRatio="none">
   <defs>
    <filter id="softn" x="-10%" y="-10%" width="120%" height="120%"><feTurbulence type="fractalNoise" baseFrequency="0.18" numOctaves="2" seed="3" result="n"/><feDisplacementMap in="SourceGraphic" in2="n" scale="4" result="d"/><feGaussianBlur in="d" stdDeviation="0.6"/></filter>
    <filter id="soft2n" x="-20%" y="-20%" width="140%" height="140%"><feGaussianBlur stdDeviation="0.6"/></filter>
   </defs>
   <rect x="0" y="0" width="210" height="201" fill="#fffde0"/>
   <g filter="url(#softn)">
   <circle cx="71" cy="4" r="6" fill="#dcd66e" fill-opacity="0.72"/><circle cx="81" cy="8" r="7" fill="#dcd66e" fill-opacity="0.72"/><circle cx="92" cy="3" r="7" fill="#dcd66e" fill-opacity="0.72"/><circle cx="104" cy="6" r="8" fill="#dcd66e" fill-opacity="0.72"/><circle cx="116" cy="2" r="7" fill="#dcd66e" fill-opacity="0.72"/><circle cx="127" cy="8" r="8" fill="#dcd66e" fill-opacity="0.72"/><circle cx="139" cy="4" r="7" fill="#dcd66e" fill-opacity="0.72"/><circle cx="151" cy="10" r="8" fill="#dcd66e" fill-opacity="0.72"/><circle cx="163" cy="6" r="7" fill="#dcd66e" fill-opacity="0.72"/><circle cx="175" cy="3" r="7" fill="#dcd66e" fill-opacity="0.72"/><circle cx="187" cy="10" r="8" fill="#dcd66e" fill-opacity="0.72"/><circle cx="199" cy="4" r="8" fill="#dcd66e" fill-opacity="0.72"/><circle cx="206" cy="15" r="6" fill="#dcd66e" fill-opacity="0.72"/><circle cx="109" cy="16" r="5" fill="#dcd66e" fill-opacity="0.72"/><circle cx="129" cy="20" r="6" fill="#dcd66e" fill-opacity="0.72"/><circle cx="149" cy="22" r="5" fill="#dcd66e" fill-opacity="0.72"/><circle cx="164" cy="18" r="6" fill="#dcd66e" fill-opacity="0.72"/><circle cx="194" cy="22" r="6" fill="#dcd66e" fill-opacity="0.72"/><circle cx="204" cy="30" r="5" fill="#dcd66e" fill-opacity="0.72"/><circle cx="84" cy="15" r="4" fill="#dcd66e" fill-opacity="0.72"/><circle cx="59" cy="2" r="3" fill="#dcd66e" fill-opacity="0.72"/><circle cx="74" cy="12" r="5" fill="#dcd66e" fill-opacity="0.72"/><circle cx="97" cy="12" r="6" fill="#dcd66e" fill-opacity="0.72"/><circle cx="119" cy="14" r="6" fill="#dcd66e" fill-opacity="0.72"/><circle cx="139" cy="16" r="7" fill="#dcd66e" fill-opacity="0.72"/><circle cx="157" cy="16" r="6" fill="#dcd66e" fill-opacity="0.72"/><circle cx="175" cy="16" r="7" fill="#dcd66e" fill-opacity="0.72"/><circle cx="185" cy="25" r="6" fill="#dcd66e" fill-opacity="0.72"/><circle cx="199" cy="18" r="7" fill="#dcd66e" fill-opacity="0.72"/><circle cx="205" cy="40" r="5" fill="#dcd66e" fill-opacity="0.72"/><circle cx="143" cy="30" r="5" fill="#dcd66e" fill-opacity="0.72"/><circle cx="155" cy="35" r="4" fill="#dcd66e" fill-opacity="0.72"/><circle cx="171" cy="40" r="4" fill="#dcd66e" fill-opacity="0.72"/><circle cx="119" cy="22" r="4" fill="#dcd66e" fill-opacity="0.72"/><circle cx="184" cy="38" r="5" fill="#dcd66e" fill-opacity="0.72"/><circle cx="205" cy="2" r="6" fill="#dcd66e" fill-opacity="0.72"/><circle cx="159" cy="2" r="6" fill="#dcd66e" fill-opacity="0.72"/><circle cx="139" cy="0" r="6" fill="#dcd66e" fill-opacity="0.72"/>
   <circle cx="131" cy="28" r="4" fill="#d8d266" fill-opacity="0.72"/><circle cx="135" cy="38" r="5" fill="#d8d266" fill-opacity="0.72"/><circle cx="139" cy="48" r="5" fill="#d8d266" fill-opacity="0.72"/><circle cx="143" cy="60" r="6" fill="#d8d266" fill-opacity="0.72"/><circle cx="147" cy="73" r="5" fill="#d8d266" fill-opacity="0.72"/><circle cx="151" cy="86" r="5" fill="#d8d266" fill-opacity="0.72"/><circle cx="155" cy="98" r="5" fill="#d8d266" fill-opacity="0.72"/><circle cx="158" cy="110" r="4" fill="#d8d266" fill-opacity="0.72"/><circle cx="154" cy="122" r="4" fill="#d8d266" fill-opacity="0.72"/><circle cx="150" cy="136" r="3.5" fill="#d8d266" fill-opacity="0.72"/><circle cx="147" cy="150" r="3" fill="#d8d266" fill-opacity="0.72"/><circle cx="145" cy="163" r="3" fill="#d8d266" fill-opacity="0.72"/><circle cx="149" cy="177" r="4" fill="#d8d266" fill-opacity="0.72"/>
   <circle cx="167" cy="30" r="5" fill="#d8d266" fill-opacity="0.72"/><circle cx="173" cy="42" r="4.5" fill="#d8d266" fill-opacity="0.72"/><circle cx="178" cy="54" r="4.5" fill="#d8d266" fill-opacity="0.72"/><circle cx="182" cy="67" r="5" fill="#d8d266" fill-opacity="0.72"/><circle cx="187" cy="80" r="4.5" fill="#d8d266" fill-opacity="0.72"/><circle cx="190" cy="92" r="4" fill="#d8d266" fill-opacity="0.72"/><circle cx="193" cy="104" r="3.5" fill="#d8d266" fill-opacity="0.72"/><circle cx="190" cy="116" r="3" fill="#d8d266" fill-opacity="0.72"/><circle cx="194" cy="130" r="2.5" fill="#d8d266" fill-opacity="0.72"/><circle cx="188" cy="125" r="2" fill="#d8d266" fill-opacity="0.72"/>
   <circle cx="201" cy="40" r="6" fill="#d8d266" fill-opacity="0.72"/><circle cx="204" cy="55" r="5" fill="#d8d266" fill-opacity="0.72"/><circle cx="199" cy="70" r="3.5" fill="#d8d266" fill-opacity="0.72"/><circle cx="203" cy="85" r="3" fill="#d8d266" fill-opacity="0.72"/>
   <circle cx="37" cy="3" r="3.5" fill="#dcd66e" fill-opacity="0.6"/><circle cx="39" cy="12" r="3" fill="#dcd66e" fill-opacity="0.6"/><circle cx="123" cy="40" r="2.5" fill="#dcd66e" fill-opacity="0.6"/><circle cx="127" cy="50" r="2" fill="#dcd66e" fill-opacity="0.6"/><circle cx="163" cy="40" r="2.5" fill="#dcd66e" fill-opacity="0.6"/><circle cx="114" cy="30" r="2.5" fill="#dcd66e" fill-opacity="0.6"/><circle cx="161" cy="65" r="2" fill="#dcd66e" fill-opacity="0.6"/><circle cx="171" cy="90" r="2" fill="#dcd66e" fill-opacity="0.6"/>
   <circle cx="81" cy="6" r="5" fill="#eeeaa0" fill-opacity="0.8"/>
   <circle cx="119" cy="7" r="4" fill="#f0eca8" fill-opacity="0.8"/>
   <circle cx="177" cy="6" r="5" fill="#f2b060" fill-opacity="0.75"/>
   <ellipse cx="167" cy="28" rx="2.5" ry="6" fill="#f0a855" fill-opacity="0.9"/>
   </g>
   <g fill="#f2a655" fill-opacity="0.95" filter="url(#soft2n)">
    <path transform="translate(47,30)" d="M-1 -10 C1 -6 2 -5 3 -4 C6 -7 9 -8 12 -6 C9 -3 7 -1 6 1 C9 2 12 4 12 7 C8 6 5 5 3 4 C3 7 2 10 1 11 C-1 8 -2 6 -2 4 C-5 6 -8 8 -10 8 C-8 5 -7 2 -6 0 C-9 -1 -12 -3 -13 -5 C-9 -5 -6 -4 -4 -3 C-4 -6 -3 -8 -1 -10 Z"/>
    <path transform="translate(102,33) scale(0.9)" d="M-1 -10 C1 -6 2 -5 3 -4 C6 -7 9 -8 12 -6 C9 -3 7 -1 6 1 C9 2 12 4 12 7 C8 6 5 5 3 4 C3 7 2 10 1 11 C-1 8 -2 6 -2 4 C-5 6 -8 8 -10 8 C-8 5 -7 2 -6 0 C-9 -1 -12 -3 -13 -5 C-9 -5 -6 -4 -4 -3 C-4 -6 -3 -8 -1 -10 Z"/>
   </g>
   <path d="M55 0 L48 22 M103 12 L102 25" stroke="#cfcf90" stroke-width="0.8" fill="none"/>
  </svg>
 </div>
 <div class="a" style="left:2px;top:179px;width:194px;height:1px;background:#a9a9a9"></div>
 <div class="a" style="left:2px;top:181px;width:60px;height:12px;background:#fff;font-size:11px;line-height:15px;padding-left:4px;color:#111;letter-spacing:-0.2px">63.43%</div>
 <svg class="a" style="left:66px;top:180px" width="148" height="14" viewBox="0 0 148 14">
  <path d="M4 11 L8 6 L12 11 Z" fill="none" stroke="#222" stroke-width="1"/><path d="M3 11.5 H13" stroke="#222" stroke-width="1.3"/>
  <path d="M25 8.5 H100" stroke="#b3b3b3" stroke-width="1"/><path d="M25 9.5 H100" stroke="#fff" stroke-width="1"/>
  <path d="M56.5 13 V5 C56.5 2 62.5 2 62.5 5 V13 Z" fill="#e8e8e8" stroke="#777" stroke-width="1"/>
  <path d="M109 11 L114 5 L118 9 L121 6 L126 11 Z" fill="none" stroke="#222" stroke-width="1.2"/><path d="M108 11.5 H127" stroke="#222" stroke-width="1.4"/>
  <g fill="#999"><rect x="144" y="2" width="1" height="1"/><rect x="142" y="4" width="1" height="1"/><rect x="144" y="4" width="1" height="1"/><rect x="140" y="6" width="1" height="1"/><rect x="142" y="6" width="1" height="1"/><rect x="144" y="6" width="1" height="1"/><rect x="138" y="8" width="1" height="1"/><rect x="140" y="8" width="1" height="1"/><rect x="142" y="8" width="1" height="1"/><rect x="144" y="8" width="1" height="1"/></g>
 </svg>
</div>
<!-- Panel: color -->
<div class="pn" style="top:296px;height:145px">
 <div class="tabrow"></div>
 <div class="tab act" style="left:6px;width:45px">颜色<span class="tx">×</span></div>
 <div class="tab" style="left:53px;width:35px">色板</div>
 <div class="tab" style="left:90px;width:35px">样式</div>
 <div class="pmin" style="left:190px;top:7px"></div><div class="pcl" style="left:203px;top:3px"></div>
 <div class="pmenu"><svg width="30" height="10" viewBox="0 0 30 10"><path d="M4 10 L10 1.5 Q11 0.5 12.5 0.5 H31 V10 Z" fill="#ededed" stroke="#9a9a9a" stroke-width="1"/><path d="M14 4 H18.5 L16.2 6.8 Z" fill="#222"/><path d="M20 2.5 H27 M20 5.5 H27 M20 8.5 H27" stroke="#222" stroke-width="1.1"/></svg></div>
 <div class="a" style="left:20px;top:52px;width:20px;height:20px;background:#fff;border:1px solid #8a8a8a"></div>
 <div class="a" style="left:8px;top:40px;width:20px;height:20px;background:#e5e7e8;border:1px solid #111"></div>
 <div class="cl" style="top:44px">R</div><div class="cl" style="top:70px">G</div><div class="cl" style="top:96px">B</div>
 <div class="sl" style="top:44px;background:linear-gradient(90deg,#1cc7d8,#e5e7e8 97%,#f8dede)"></div>
 <div class="sl" style="top:70px;background:linear-gradient(90deg,#c21ec4,#e5e7e8 97%)"></div>
 <div class="sl" style="top:96px;background:linear-gradient(90deg,#dede1e,#e5e7e8 97%)"></div>
 <svg class="a" style="left:138px;top:49px" width="14" height="64" viewBox="0 0 14 64">
  <g fill="#cfe3cf" stroke="#4c7a4c" stroke-width="1.2"><path d="M2.5 8.5 L7 2 L11.5 8.5 Z"/><path d="M2.5 34.5 L7 28 L11.5 34.5 Z"/><path d="M2.5 60.5 L7 54 L11.5 60.5 Z"/></g>
 </svg>
 <div class="cv" style="top:36px">229</div><div class="cv" style="top:62px">231</div><div class="cv" style="top:88px">232</div>
 <div class="a" style="left:7px;top:119px;width:199px;height:16px;background:linear-gradient(#fff0 0,#fff0 100%),linear-gradient(90deg,#c81e1e 0,#e87a1c 8%,#f4ef2c 15%,#4dba3a 27%,#1a9a4a 35%,#1ab4e0 48%,#1f5fc0 56%,#1f2a8a 65%,#7a1a8a 74%,#c81e6a 84%,#d81e1e 94%,#111 94.5%,#111 100%)"></div>
 <div class="a" style="left:7px;top:119px;width:199px;height:16px;background:linear-gradient(rgba(255,255,255,.55),rgba(255,255,255,0) 45%,rgba(0,0,0,0) 55%,rgba(0,0,0,.9))"></div>
 <div class="a" style="left:198px;top:119px;width:8px;height:8px;background:#fff"></div>
 <div class="a" style="left:198px;top:127px;width:8px;height:8px;background:#000"></div>
</div>
<!-- Panel: layers -->
<div class="pn" style="top:444px;height:277px">
 <div class="tabrow"></div>
 <div class="tab act" style="left:6px;width:45px">图层<span class="tx">×</span></div>
 <div class="tab" style="left:53px;width:35px">通道</div>
 <div class="tab" style="left:90px;width:35px">路径</div>
 <div class="pmin" style="left:190px;top:7px"></div><div class="pcl" style="left:203px;top:3px"></div>
 <div class="pmenu"><svg width="30" height="10" viewBox="0 0 30 10"><path d="M4 10 L10 1.5 Q11 0.5 12.5 0.5 H31 V10 Z" fill="#ededed" stroke="#9a9a9a" stroke-width="1"/><path d="M14 4 H18.5 L16.2 6.8 Z" fill="#222"/><path d="M20 2.5 H27 M20 5.5 H27 M20 8.5 H27" stroke="#222" stroke-width="1.1"/></svg></div>
 <div class="a" style="left:5px;top:31px;width:90px;height:21px;background:#fff;border:1px solid #e2e2e2;font-size:12px;line-height:21px;padding-left:6px">正常</div>
 <div class="a" style="left:84px;top:41px;width:0;height:0;border-top:4px solid #000;border-left:4px solid transparent;border-right:4px solid transparent"></div>
 <div class="a" style="left:99px;top:33px;font-size:12px;line-height:17px">不透明度:</div>
 <div class="ibox" style="top:31px">100%</div><div class="ibtn" style="top:31px"></div>
 <div class="a" style="left:2px;top:53px;width:198px;height:1px;background:#c6c6c6"></div>
 <div class="a" style="left:8px;top:61px;font-size:12px;line-height:17px">锁定:</div>
 <svg class="a" style="left:40px;top:59px" width="70" height="18" viewBox="0 0 70 18">
  <rect x="2.5" y="4.5" width="10" height="10" fill="#fff" stroke="#444"/><rect x="3" y="5" width="3" height="3" fill="#bbb"/><rect x="9" y="5" width="3" height="3" fill="#bbb"/><rect x="6" y="8" width="3" height="3" fill="#bbb"/><rect x="3" y="11" width="3" height="3" fill="#bbb"/><rect x="9" y="11" width="3" height="3" fill="#bbb"/>
  <path d="M23 12 L30 4" stroke="#444" stroke-width="2" fill="none"/><path d="M23.5 11.5 L29.5 4.5" stroke="#bbb" stroke-width="0.6" fill="none"/><path d="M18.5 16 C19 13 21 11 23.5 11.5 C24 13.5 22 15.5 18.5 16 Z" fill="#999" stroke="#333" stroke-width="0.8"/>
  <path d="M42 4 V15 M37 9.5 H47" stroke="#111" stroke-width="1.3"/><path d="M42 3 L40.2 5.2 H43.8 Z M42 16 L40.2 13.8 H43.8 Z M36 9.5 L38.2 7.7 V11.3 Z M48 9.5 L45.8 7.7 V11.3 Z" fill="#111"/>
  <path d="M56 9 V7 C56 3.5 62 3.5 62 7 V9" fill="none" stroke="#333" stroke-width="1.5"/><rect x="54.5" y="8.5" width="9" height="7" fill="#444"/>
 </svg>
 <div class="a" style="left:123px;top:61px;font-size:12px;line-height:17px">填充:</div>
 <div class="ibox" style="top:59px">100%</div><div class="ibtn" style="top:59px"></div>
 <div class="a" style="left:2px;top:80px;width:198px;height:1px;background:#bcbcbc"></div>
 <!-- layer rows -->
 <div class="a" style="left:24px;top:81px;width:173px;height:24px;background:#3399ff"></div>
 <div class="a" style="left:2px;top:104px;width:195px;height:1px;background:#b0b0b0"></div>
 <div class="a" style="left:2px;top:128px;width:195px;height:1px;background:#b0b0b0"></div>
 <div class="a" style="left:2px;top:152px;width:195px;height:1px;background:#a8a8a8"></div>
 <div class="a" style="left:24px;top:81px;width:1px;height:71px;background:#c8c8c8"></div>
 <div class="eye" style="top:84px"><svg class="a" style="left:2px;top:3px" width="14" height="12" viewBox="0 0 14 12"><path d="M1 6 C3 2.5 5.5 1.5 7.5 1.5 C10 1.5 12 3 13.3 5.5 C11.5 9 9.5 10 7 10 C4.5 10 2.5 8.5 1 6 Z" fill="#fff" stroke="#333" stroke-width="1.1"/><path d="M1.5 5 C4 1 10 0.5 13 4.5" fill="none" stroke="#555" stroke-width="1.3"/><circle cx="7" cy="5.8" r="3.3" fill="#111"/><circle cx="6" cy="4.8" r="0.9" fill="#fff"/><path d="M2.5 8 C5 10.5 9.5 10.5 12 8" fill="none" stroke="#888" stroke-width="0.8"/></svg></div><div class="eye" style="top:108px"><svg class="a" style="left:2px;top:3px" width="14" height="12" viewBox="0 0 14 12"><path d="M1 6 C3 2.5 5.5 1.5 7.5 1.5 C10 1.5 12 3 13.3 5.5 C11.5 9 9.5 10 7 10 C4.5 10 2.5 8.5 1 6 Z" fill="#fff" stroke="#333" stroke-width="1.1"/><path d="M1.5 5 C4 1 10 0.5 13 4.5" fill="none" stroke="#555" stroke-width="1.3"/><circle cx="7" cy="5.8" r="3.3" fill="#111"/><circle cx="6" cy="4.8" r="0.9" fill="#fff"/><path d="M2.5 8 C5 10.5 9.5 10.5 12 8" fill="none" stroke="#888" stroke-width="0.8"/></svg></div><div class="eye" style="top:132px"><svg class="a" style="left:2px;top:3px" width="14" height="12" viewBox="0 0 14 12"><path d="M1 6 C3 2.5 5.5 1.5 7.5 1.5 C10 1.5 12 3 13.3 5.5 C11.5 9 9.5 10 7 10 C4.5 10 2.5 8.5 1 6 Z" fill="#fff" stroke="#333" stroke-width="1.1"/><path d="M1.5 5 C4 1 10 0.5 13 4.5" fill="none" stroke="#555" stroke-width="1.3"/><circle cx="7" cy="5.8" r="3.3" fill="#111"/><circle cx="6" cy="4.8" r="0.9" fill="#fff"/><path d="M2.5 8 C5 10.5 9.5 10.5 12 8" fill="none" stroke="#888" stroke-width="0.8"/></svg></div>
 <div class="th" style="top:84px;box-shadow:0 0 0 1px #fff,0 0 0 2px #1a1a1a"></div>
 <div class="th" style="top:108px"></div>
 <div class="th" style="top:132px;background:#fff;border-color:#222"></div>
 <div class="a" style="left:70px;top:85px;font-size:12px;line-height:16px;color:#fff">图层 1 副本</div>
 <div class="a" style="left:70px;top:109px;font-size:12px;line-height:16px;color:#111">图层 1</div>
 <div class="a" style="left:72px;top:133px;font-size:12px;line-height:16px;color:#111;font-style:italic">背景</div>
 <svg class="a" style="left:170px;top:136px" width="12" height="12" viewBox="0 0 12 12"><path d="M3 5 V3.5 C3 0.5 9 0.5 9 3.5 V5" fill="none" stroke="#555" stroke-width="1.2"/><rect x="1.5" y="5" width="9" height="6" fill="#ddd" stroke="#444"/><rect x="5" y="7" width="2" height="2" fill="#444"/></svg>
 <!-- scrollbar -->
 <div class="a" style="left:197px;top:81px;width:16px;height:176px;background:#ececec"></div>
 <div class="a" style="left:201px;top:87px;width:0;height:0;border-bottom:5px solid #9a9a9a;border-left:5px solid transparent;border-right:5px solid transparent"></div>
 <div class="a" style="left:201px;top:246px;width:0;height:0;border-top:5px solid #9a9a9a;border-left:5px solid transparent;border-right:5px solid transparent"></div>
 <div class="a" style="left:2px;top:256px;width:195px;height:1px;background:#a0a0a0"></div>
 <svg class="a" style="left:0;top:257px" width="214" height="20" viewBox="0 0 214 20">
  <g fill="none" stroke="#777" stroke-width="1.4"><rect x="12.5" y="8" width="8" height="5" rx="2.5"/><rect x="19.5" y="8" width="8" height="5" rx="2.5"/></g>
  <text x="41" y="16" font-family="Liberation Serif" font-style="italic" font-weight="bold" font-size="13" fill="#444">fx</text><path d="M56 15 H60 L58 17 Z" fill="#111"/>
  <rect x="69.5" y="3.5" width="13" height="12" fill="#888" stroke="#333"/><circle cx="76" cy="9.5" r="3.8" fill="#fff"/>
  <circle cx="104" cy="10" r="6" fill="#fff" stroke="#333" stroke-width="1.2"/><path d="M99.8 14.2 A6 6 0 0 1 108.2 5.8 Z" fill="#222"/><path d="M111 15 H115 L113 17 Z" fill="#111"/>
  <path d="M124.5 6.5 H129 L130 7.5 H137.5 V15.5 H124.5 Z" fill="#eee" stroke="#555"/>
  <rect x="152.5" y="5.5" width="9" height="10" fill="#fff" stroke="#333"/><path d="M154 11.5 H157 V14.5 Z" fill="#333"/>
  <path d="M180 7.5 H189 M181.5 7.5 L182.5 16.5 H187 L188 7.5 M183 6.5 V5 H186 V6.5" fill="#eee" stroke="#333" stroke-width="1.1"/>
  <g fill="#999"><rect x="210" y="5" width="1" height="1"/><rect x="208" y="7" width="1" height="1"/><rect x="210" y="7" width="1" height="1"/><rect x="206" y="9" width="1" height="1"/><rect x="208" y="9" width="1" height="1"/><rect x="210" y="9" width="1" height="1"/><rect x="204" y="11" width="1" height="1"/><rect x="206" y="11" width="1" height="1"/><rect x="208" y="11" width="1" height="1"/><rect x="210" y="11" width="1" height="1"/></g>
 </svg>
</div>

<div id="taskbar" class="a">
 <div class="a" style="left:0;top:0;width:1024px;height:1px;background:#0f2a3c"></div><div class="a" style="left:0;top:1px;width:1024px;height:1px;background:#6f9ab6"></div>
 <div class="a" style="left:0;top:2px;width:1024px;height:38px;background:linear-gradient(60deg,rgba(255,255,255,0) 0,rgba(255,255,255,0) 30%,rgba(255,255,255,.09) 33%,rgba(255,255,255,.06) 38%,rgba(255,255,255,0) 41%,rgba(255,255,255,0) 47%,rgba(255,255,255,.08) 50%,rgba(255,255,255,.03) 55%,rgba(255,255,255,0) 57%,rgba(255,255,255,0) 63%,rgba(255,255,255,.07) 66%,rgba(255,255,255,0) 70%),linear-gradient(rgba(255,255,255,.05),rgba(0,0,0,.05))"></div>
 <svg class="a" style="left:6px;top:1px" width="42" height="40" viewBox="0 0 42 40">
  <defs>
   <radialGradient id="orb" cx="0.5" cy="0.85" r="0.7"><stop offset="0" stop-color="#2fd0f5"/><stop offset="0.45" stop-color="#1b7fc0"/><stop offset="1" stop-color="#123f6a"/></radialGradient>
   <linearGradient id="orbhi" x1="0" y1="0" x2="0" y2="1"><stop offset="0" stop-color="#d8e6ee" stop-opacity="0.75"/><stop offset="1" stop-color="#8aa6b8" stop-opacity="0.35"/></linearGradient>
   <clipPath id="orbclip"><circle cx="20.5" cy="20" r="17.5"/></clipPath>
  </defs>
  <circle cx="20.5" cy="20" r="18" fill="url(#orb)" stroke="#8fb8d2" stroke-width="1" stroke-opacity="0.8"/>
  <g clip-path="url(#orbclip)"><path d="M0 0 H42 V19 C30 17 12 17 0 19 Z" fill="url(#orbhi)"/></g>
  <g transform="translate(1.5,0)">
  <path d="M11 9 C14 7.5 17 8 19.5 9.5 L18 18 C15.5 16.5 12.5 16.2 9.5 17.5 Z" fill="#f2661f"/>
  <path d="M20.5 10 C23.5 11.5 26.5 11.8 29.5 10 L28 18.5 C25 20 22 20 19 18.5 Z" fill="#8cc43e"/>
  <path d="M9.3 18.5 C12.5 17.2 15.5 17.5 17.8 19 L16.3 27.5 C14 26 11 25.8 8 27 Z" fill="#2aa6e8"/>
  <path d="M18.8 19.5 C21.8 21 24.8 21 27.8 19.5 L26.3 28 C23.3 29.5 20.3 29.5 17.5 28 Z" fill="#fcc12e"/>
  </g>
 </svg>
 <div class="a" style="left:841px;top:12px;font-family:'Liberation Mono',monospace;font-size:11px;line-height:12px;color:#fff">CH</div>
 <svg class="a" style="left:860px;top:10px" width="70" height="20" viewBox="0 0 70 20">
  <rect x="2.5" y="6.5" width="15" height="8" rx="1" fill="#d8e4ec" stroke="#9fb5c4" stroke-width="1"/>
  <g fill="#7d96a8"><rect x="4" y="8" width="2" height="1.5"/><rect x="7" y="8" width="2" height="1.5"/><rect x="10" y="8" width="2" height="1.5"/><rect x="13" y="8" width="2" height="1.5"/><rect x="4" y="11" width="2" height="1.5"/><rect x="7" y="11" width="5" height="1.5"/><rect x="13" y="11" width="2" height="1.5"/></g>
  <path d="M10 6 C11 3 14 4 17 1" fill="none" stroke="#9fb5c4" stroke-width="1"/>
  <path d="M29 12 L33 8 L37 12 Z" fill="#fff"/>
  <path d="M50 8 H53 L57 4.5 V17.5 L53 14 H50 Z" fill="#fff"/>
  <path d="M59.5 8 C61 10 61 12 59.5 14 M61.5 6 C64 9 64 13 61.5 16" fill="none" stroke="#fff" stroke-width="1.2"/>
 </svg>
 <div class="a" style="left:941px;top:3px;width:60px;text-align:center;font-size:13px;line-height:16px;color:#fff">9:31</div>
 <div class="a" style="left:939px;top:22px;width:64px;text-align:center;font-size:13px;line-height:16px;color:#fff">2014/4/15</div>
 <div class="a" style="left:1010px;top:1px;width:14px;height:39px;background:linear-gradient(90deg,rgba(255,255,255,.15),rgba(255,255,255,.3));border:1px solid rgba(255,255,255,.35);border-right:none"></div>
</div>

<div id="menu" class="a">
<div class="mi" style="top:1px">还原复制图层(O)<span class="k">Ctrl+Z</span></div>
<div class="mi dis" style="top:22px">前进一步(W)<span class="k">Shift+Ctrl+Z</span></div>
<div class="mi" style="top:43px">后退一步(K)<span class="k">Alt+Ctrl+Z</span></div>
<div class="sep" style="top:68px"></div>
<div class="mi dis" style="top:73px">渐隐(D)...<span class="k">Shift+Ctrl+F</span></div>
<div class="sep" style="top:98px"></div>
<div class="mi dis" style="top:103px">剪切(T)<span class="k">Ctrl+X</span></div>
<div class="mi dis" style="top:124px">拷贝(C)<span class="k">Ctrl+C</span></div>
<div class="mi dis" style="top:145px">合并拷贝(Y)<span class="k">Shift+Ctrl+C</span></div>
<div class="mi dis" style="top:166px">粘贴(P)<span class="k">Ctrl+V</span></div>
<div class="mi dis" style="top:187px">贴入(I)<span class="k">Shift+Ctrl+V</span></div>
<div class="mi dis" style="top:208px">清除(E)</div>
<div class="sep" style="top:233px"></div>
<div class="mi dis" style="top:238px">拼写检查(H)...</div>
<div class="mi dis" style="top:259px">查找和替换文本(X)...</div>
<div class="sep" style="top:284px"></div>
<div class="mi" style="top:289px">填充(L)...<span class="k">Shift+F5</span></div>
<div class="mi" style="top:310px">描边(S)...</div>
<div class="sep" style="top:335px"></div>
<div class="mi" style="top:340px">自由变换(F)<span class="k">Ctrl+T</span></div>
<div class="mi hl" style="top:361px">变换<span class="arr"></span></div>
<div class="mi dis" style="top:382px">自动对齐图层...</div>
<div class="mi dis" style="top:403px">自动混合图层</div>
<div class="sep" style="top:428px"></div>
<div class="mi" style="top:433px">定义画笔预设(B)...</div>
<div class="mi" style="top:454px">定义图案(Q)...</div>
<div class="mi dis" style="top:475px">定义自定形状(J)...</div>
<div class="sep" style="top:500px"></div>
<div class="mi" style="top:505px">清理(R)<span class="arr"></span></div>
<div class="sep" style="top:530px"></div>
<div class="mi" style="top:535px">Adobe PDF 预设(P)...</div>
<div class="mi" style="top:556px">预设管理器(M)...</div>
<div class="sep" style="top:581px"></div>
<div class="mi" style="top:586px">颜色设置(G)...<span class="k">Shift+Ctrl+K</span></div>
<div class="mi" style="top:607px">指定配置文件...</div>
<div class="mi" style="top:628px">转换为配置文件(V)...</div>
<div class="sep" style="top:653px"></div>
<div class="mi" style="top:658px">键盘快捷键(Z)...<span class="k">Alt+Shift+Ctrl+K</span></div>
<div class="mi" style="top:679px">菜单(U)...<span class="k">Alt+Shift+Ctrl+M</span></div>
<div class="mi" style="top:700px">首选项(N)<span class="arr"></span></div>
</div>
<div id="sub" class="a">
<div class="mi" style="top:1px">再次(A)<span class="k">Shift+Ctrl+T</span></div>
<div class="sep" style="top:26px"></div>
<div class="mi" style="top:31px">缩放(S)</div>
<div class="mi" style="top:52px">旋转(R)</div>
<div class="mi" style="top:73px">斜切(K)</div>
<div class="mi" style="top:94px">扭曲(D)</div>
<div class="mi" style="top:115px">透视(P)</div>
<div class="mi" style="top:136px">变形(W)</div>
<div class="sep" style="top:161px"></div>
<div class="mi" style="top:166px">旋转 180 度(1)</div>
<div class="mi" style="top:187px">旋转 90 度(顺时针)(9)</div>
<div class="mi" style="top:208px">旋转 90 度(逆时针)(0)</div>
<div class="sep" style="top:233px"></div>
<div class="mi" style="top:238px">水平翻转(H)</div>
<div class="mi" style="top:259px">垂直翻转(V)</div>
</div>
</body></html>
